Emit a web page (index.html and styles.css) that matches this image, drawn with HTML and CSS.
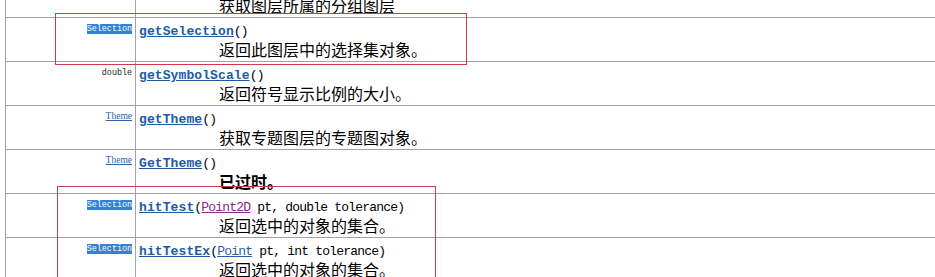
FILE: index.html
```html
<!DOCTYPE html>
<html lang="zh">
<head>
<meta charset="utf-8">
<title>Layer methods</title>
<link rel="stylesheet" href="styles.css">
</head>
<body>
<div class="page">
  <table class="summary">
    <colgroup><col class="c-type"><col class="c-method"></colgroup>
    <tr>
      <td class="type"></td>
      <td class="method"><div class="sig"></div><div class="desc">获取图层所属的分组图层</div></td>
    </tr>
    <tr>
      <td class="type"><span class="mono sel">Selection</span></td>
      <td class="method"><div class="sig"><a class="mname" href="#">getSelection</a>()</div><div class="desc">返回此图层中的选择集对象。</div></td>
    </tr>
    <tr>
      <td class="type"><span class="mono">double</span></td>
      <td class="method"><div class="sig"><a class="mname" href="#">getSymbolScale</a>()</div><div class="desc">返回符号显示比例的大小。</div></td>
    </tr>
    <tr>
      <td class="type"><a class="tlink" href="#">Theme</a></td>
      <td class="method"><div class="sig"><a class="mname" href="#">getTheme</a>()</div><div class="desc">获取专题图层的专题图对象。</div></td>
    </tr>
    <tr>
      <td class="type"><a class="tlink" href="#">Theme</a></td>
      <td class="method"><div class="sig"><a class="mname" href="#">GetTheme</a>()</div><div class="desc"><b class="dep">已过时。</b></div></td>
    </tr>
    <tr>
      <td class="type"><span class="mono sel">Selection</span></td>
      <td class="method"><div class="sig"><a class="mname" href="#">hitTest</a>(<a class="plink visited" href="#">Point2D</a>&nbsp;pt, double&nbsp;tolerance)</div><div class="desc">返回选中的对象的集合。</div></td>
    </tr>
    <tr>
      <td class="type"><span class="mono sel">Selection</span></td>
      <td class="method"><div class="sig"><a class="mname" href="#">hitTestEx</a>(<a class="plink" href="#">Point</a>&nbsp;pt, int&nbsp;tolerance)</div><div class="desc">返回选中的对象的集合。</div></td>
    </tr>
  </table>
  <div class="mark mark-1"></div>
  <div class="mark mark-2"></div>
</div>
</body>
</html>
```
FILE: styles.css
```css
html, body {
  margin: 0;
  padding: 0;
  background: #ffffff;
  overflow: hidden;
}
.page {
  position: relative;
  display: flow-root;
  height: 277px;
  overflow: hidden;
}
.summary {
  margin: -27px 0 0 5px;
  width: 1100px;
  table-layout: fixed;
  border-collapse: collapse;
  font-family: "Liberation Mono", monospace;
  color: #000;
}
.c-type { width: 130px; }
.summary td {
  border: 1px solid #a3a3a3;
  padding: 3px;
  vertical-align: top;
}
.type {
  text-align: right;
  line-height: 12px;
}
.mono {
  font-family: "Liberation Mono", monospace;
  font-size: 8.4px;
  color: #222;
}
.sel {
  background: #3382d5;
  color: #ffffff;
}
.tlink {
  font-family: "Liberation Serif", serif;
  font-size: 9.5px;
  color: #2a63b0;
  text-decoration: underline;
}
.sig {
  padding-top: 2px;
  height: 17px;
  line-height: 17px;
  font-size: 13px;
  letter-spacing: -0.8px;
  white-space: nowrap;
}
.mname {
  font-weight: bold;
  letter-spacing: 0.1px;
  color: #1d5aa6;
  text-decoration: underline;
}
.plink {
  color: #2a5fa8;
  text-decoration: underline;
}
.plink.visited {
  color: #862a86;
}
.desc {
  height: 18px;
  line-height: 18px;
  padding-left: 80px;
  font-family: "Noto Sans CJK SC", sans-serif;
  font-size: 16px;
  white-space: nowrap;
}
.dep {
  font-weight: bold;
}
.mark {
  position: absolute;
  border: 1px solid #cf3a4c;
  pointer-events: none;
}
.mark-1 {
  left: 55px;
  top: 13px;
  width: 410px;
  height: 50px;
}
.mark-2 {
  left: 57px;
  top: 186px;
  width: 377px;
  height: 120px;
}
```
